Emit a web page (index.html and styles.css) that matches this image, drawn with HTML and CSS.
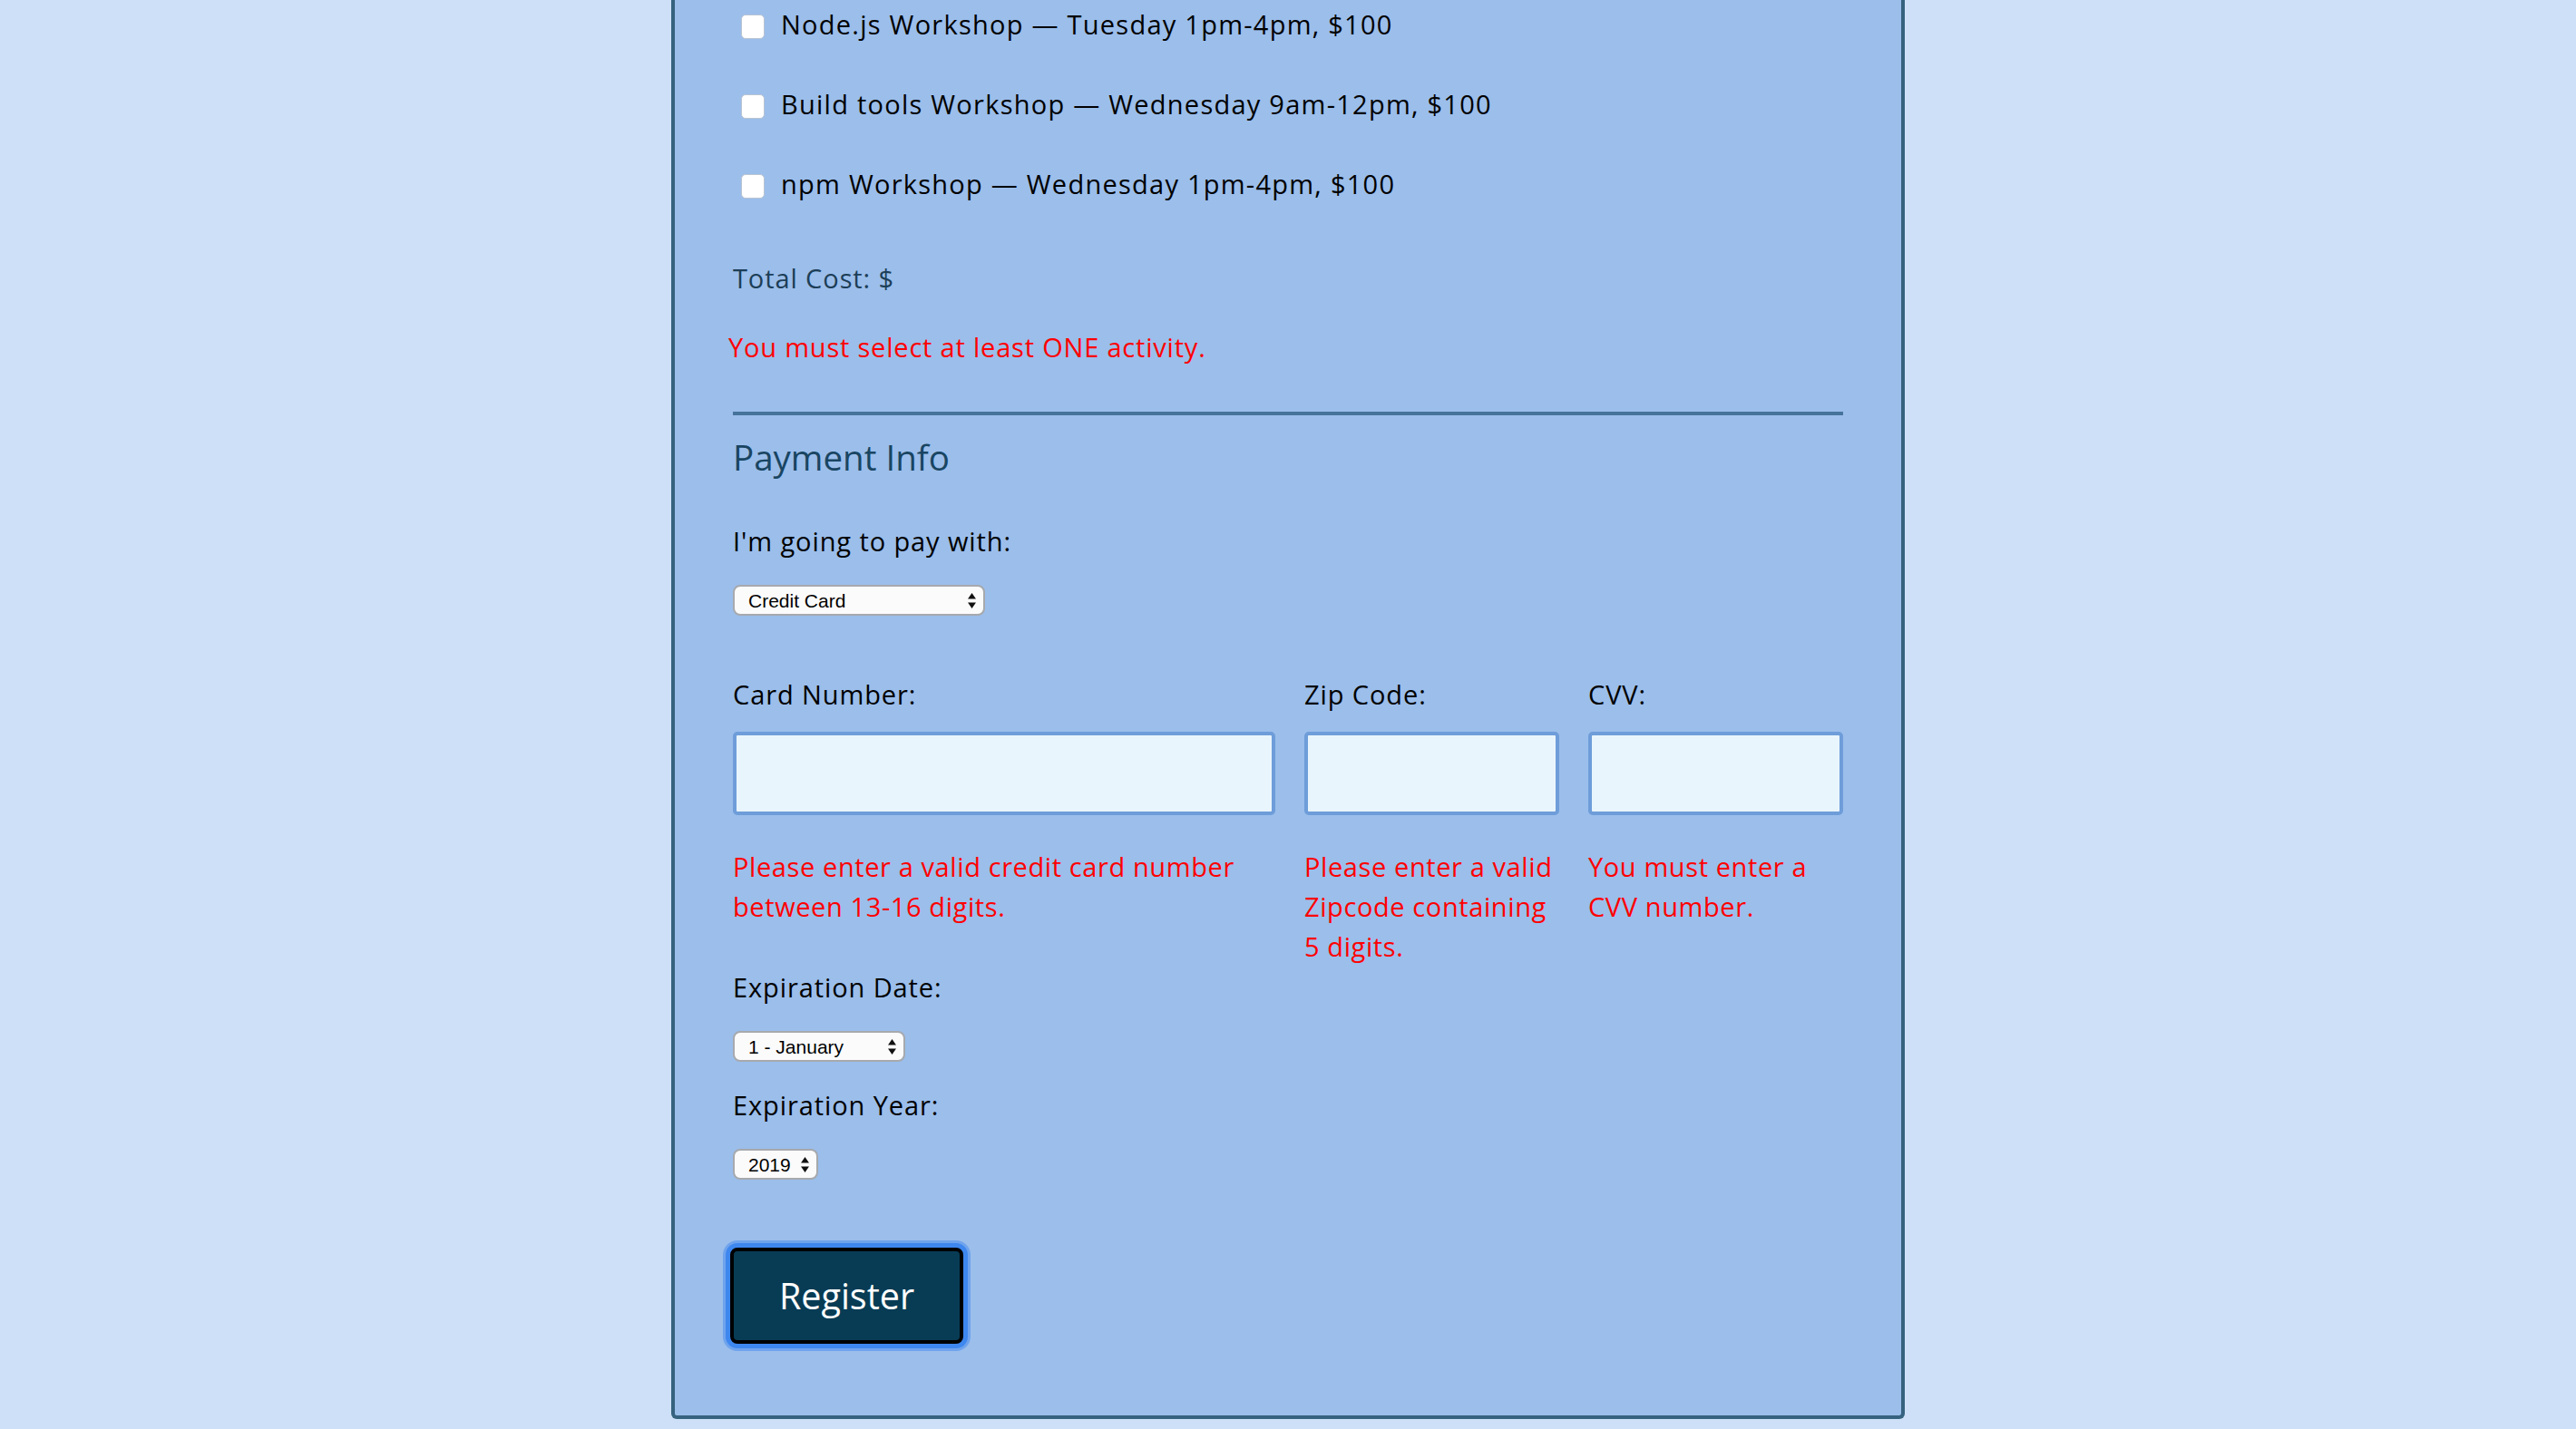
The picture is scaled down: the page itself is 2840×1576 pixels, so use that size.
FILE: index.html
```html
<!DOCTYPE html>
<html lang="en">
<head>
<meta charset="utf-8">
<title>Registration</title>
<link rel="stylesheet" href="styles.css">
</head>
<body>
<form class="form">
  <div class="activities">
    <label class="activity"><input class="check" type="checkbox"><span>Node.js Workshop — Tuesday 1pm-4pm, $100</span></label>
    <label class="activity"><input class="check" type="checkbox"><span>Build tools Workshop — Wednesday 9am-12pm, $100</span></label>
    <label class="activity"><input class="check" type="checkbox"><span>npm Workshop — Wednesday 1pm-4pm, $100</span></label>
  </div>
  <p class="total">Total Cost: $</p>
  <p class="error error-activity">You must select at least ONE activity.</p>

  <div class="payment">
    <h2 class="section-title">Payment Info</h2>
    <label class="label label-pay">I'm going to pay with:</label>
    <span class="select-wrap select-pay">
      <select class="select"><option>Credit Card</option><option>PayPal</option><option>Bitcoin</option></select>
      <svg class="arrows" width="9" height="17" viewBox="0 0 9 17"><path d="M4.5 0 L9 6.5 L0 6.5 Z M0 10.5 L9 10.5 L4.5 17 Z" fill="#111"/></svg>
    </span>

    <div class="card-grid">
      <div class="field">
        <label class="label">Card Number:</label>
        <input class="text-input" type="text">
        <p class="error field-error">Please enter a valid credit card number<br>between 13-16 digits.</p>
      </div>
      <div class="field">
        <label class="label">Zip Code:</label>
        <input class="text-input" type="text">
        <p class="error field-error">Please enter a valid<br>Zipcode containing<br>5 digits.</p>
      </div>
      <div class="field">
        <label class="label">CVV:</label>
        <input class="text-input" type="text">
        <p class="error field-error">You must enter a<br>CVV number.</p>
      </div>
    </div>

    <label class="label label-exp">Expiration Date:</label>
    <span class="select-wrap select-month">
      <select class="select"><option>1 - January</option></select>
      <svg class="arrows" width="9" height="17" viewBox="0 0 9 17"><path d="M4.5 0 L9 6.5 L0 6.5 Z M0 10.5 L9 10.5 L4.5 17 Z" fill="#111"/></svg>
    </span>
    <label class="label label-exp">Expiration Year:</label>
    <span class="select-wrap select-year">
      <select class="select"><option>2019</option></select>
      <svg class="arrows" width="9" height="17" viewBox="0 0 9 17"><path d="M4.5 0 L9 6.5 L0 6.5 Z M0 10.5 L9 10.5 L4.5 17 Z" fill="#111"/></svg>
    </span>
  </div>

  <button class="register" type="button">Register</button>
</form>
</body>
</html>
```

FILE: styles.css
```css
* {
  box-sizing: border-box;
}

html, body {
  margin: 0;
  padding: 0;
}

body {
  background: #cde0f7;
  font-family: "Open Sans", "Noto Sans", sans-serif;
  font-size: 29px;
  line-height: 42px;
  letter-spacing: 0.9px;
  color: #000;
  padding-bottom: 10px;
}

.form {
  width: 1360px;
  margin: 0 auto;
  background: #9bbeeb;
  border: 4px solid #35627f;
  border-top: none;
  border-radius: 0 0 6px 6px;
  padding: 6px 64px 79px;
}

.activities {
  display: flex;
  flex-direction: column;
  gap: 46px;
}

.activity {
  display: flex;
  align-items: center;
  height: 42px;
  letter-spacing: 1.25px;
}

.check {
  appearance: none;
  -webkit-appearance: none;
  width: 26px;
  height: 27px;
  margin: 5px 18px 0 9px;
  background: #fff;
  border: 1px solid #b9c4d2;
  border-radius: 5px;
  flex: none;
}

.total {
  margin: 62px 0 0;
  color: #1d3e57;
}

.error {
  color: #ff0000;
  margin: 0;
  letter-spacing: 0.6px;
}

.error-activity {
  margin: 34px 0 0 -5px;
  letter-spacing: 0.8px;
}

.payment {
  border-top: 4px solid #46739a;
  margin-top: 50px;
  display: flex;
  flex-direction: column;
  align-items: flex-start;
}

.section-title {
  margin: 21px 0 0;
  font-size: 38.5px;
  line-height: 50px;
  letter-spacing: 0;
  font-weight: 400;
  color: #194562;
}

.label {
  display: block;
  height: 42px;
}

.label-pay {
  margin-top: 47px;
}

.select-wrap {
  position: relative;
  display: block;
  height: 34px;
  margin-top: 27px;
}

.select-pay { width: 278px; }
.select-month { width: 190px; }
.select-year { width: 94px; }

.select {
  appearance: none;
  -webkit-appearance: none;
  display: block;
  width: 100%;
  height: 34px;
  border: 2px solid #a7a9ad;
  border-radius: 8px;
  background: #fbfbfb;
  font-family: "Liberation Sans", Arial, sans-serif;
  font-size: 21px;
  letter-spacing: 0;
  color: #000;
  padding: 0 0 0 15px;
  margin: 0;
}

.arrows {
  position: absolute;
  right: 10px;
  top: 9px;
}

.card-grid {
  display: grid;
  grid-template-columns: 598px 281px 1fr;
  column-gap: 32px;
  width: 100%;
  margin-top: 66px;
}

.field {
  display: flex;
  flex-direction: column;
}

.text-input {
  margin-top: 20px;
  height: 92px;
  width: 100%;
  background: #e9f5fc;
  border: 4px solid #6e9dd9;
  border-radius: 5px;
}

.field-error {
  margin-top: 35px;
  line-height: 44px;
  white-space: nowrap;
}

.label-exp {
  margin-top: 2px;
}

.select-month + .label-exp {
  margin-top: 27px;
}

.register {
  display: block;
  margin-top: 75px;
  margin-left: -3px;
  width: 257px;
  height: 106px;
  background: #083c55;
  border: 4px solid #000;
  border-radius: 8px;
  color: #fff;
  font-family: "Open Sans", "Noto Sans", sans-serif;
  font-size: 39.5px;
  box-shadow: 0 0 0 5px #3e87ef, 0 0 0 8px #6fa3ec;
}
```
